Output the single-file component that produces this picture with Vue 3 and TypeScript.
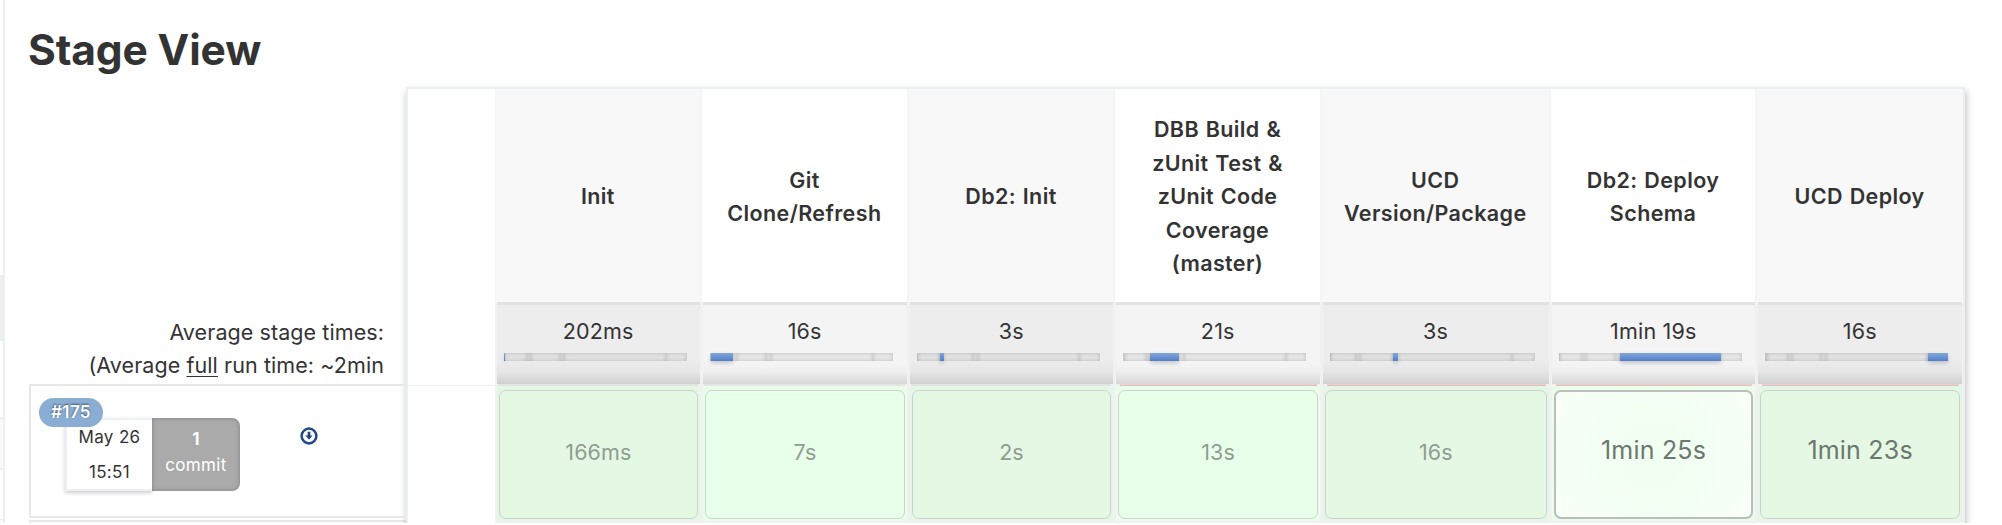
<script setup lang="ts">
interface Stage {
  name: string[]
  average: string
  duration: string
  weight: number
  wide?: boolean
  failedBefore?: boolean
  long?: boolean
  hovered?: boolean
}

const stages: Stage[] = [
  { name: ['Init'], average: '202ms', duration: '166ms', weight: 1.3 },
  { name: ['Git', 'Clone/Refresh'], average: '16s', duration: '7s', weight: 21.5 },
  { name: ['Db2: Init'], average: '3s', duration: '2s', weight: 4 },
  {
    name: ['DBB Build &', 'zUnit Test &', 'zUnit Code', 'Coverage', '(master)'],
    average: '21s', duration: '13s', weight: 29, failedBefore: true,
  },
  { name: ['UCD', 'Version/Package'], average: '3s', duration: '16s', weight: 4.7, wide: true, failedBefore: true },
  {
    name: ['Db2: Deploy', 'Schema'],
    average: '1min 19s', duration: '1min 25s', weight: 101, failedBefore: true, long: true, hovered: true,
  },
  { name: ['UCD Deploy'], average: '16s', duration: '1min 23s', weight: 20.5, failedBefore: true, long: true },
]
</script>

<template>
  <div class="page">
    <aside class="rail">
      <i class="selected"></i>
      <i class="item"></i>
      <i class="next"></i>
    </aside>
    <main>
      <h1>Stage View</h1>
      <div class="view">
        <section class="runs">
          <div class="totals">
            <div>Average stage times:</div>
            <div>(Average <u>full</u> run time: ~2min</div>
          </div>
          <div class="run">
            <div class="badge">#175</div>
            <div class="when"><div>May 26</div><div>15:51</div></div>
            <div class="commits"><b>1</b><div>commit</div></div>
            <svg class="download" viewBox="0 0 18 18">
              <circle cx="9" cy="9" r="7.4" fill="#fff" stroke="#204a87" stroke-width="2.5" />
              <path d="M7.6 4.8h2.8v3.8h2.2L9 12.7 5.4 8.6h2.2z" fill="#204a87" />
            </svg>
          </div>
          <div class="next-run"></div>
        </section>
        <section class="table">
          <div class="lead"><div></div></div>
          <div
            v-for="(stage, i) in stages"
            :key="i"
            class="column"
            :class="{ odd: i % 2 === 0, wide: stage.wide }"
          >
            <header>
              <div v-for="line in stage.name" :key="line">{{ line }}</div>
            </header>
            <div class="average">
              <div class="value">{{ stage.average }}</div>
              <div class="bar">
                <i
                  v-for="(part, j) in stages"
                  :key="j"
                  :class="{ on: i === j }"
                  :style="{ flexGrow: part.weight }"
                ></i>
              </div>
            </div>
            <div class="seam" :class="{ failed: stage.failedBefore }"></div>
            <div class="cell">
              <div class="result" :class="{ long: stage.long, hovered: stage.hovered }">
                {{ stage.duration }}
              </div>
            </div>
          </div>
        </section>
      </div>
    </main>
  </div>
</template>

<style>
body {
  background: #fff;
  overflow: hidden;
}
</style>

<style scoped>
* {
  box-sizing: border-box;
}

.page {
  display: flex;
  width: 2002px;
  height: 523px;
  overflow: hidden;
  color: #333;
  font: 21.5px/33.4px Inter, sans-serif;
}

.rail {
  display: flex;
  flex-direction: column;
  width: 5px;
  border-right: 2px solid #ecf0f4;
}

.rail i {
  display: block;
}

.selected {
  margin-top: 275px;
  height: 66px;
  background: #eaeff2;
}

.item {
  margin-top: 76px;
  height: 53px;
  background: #f9f9f8;
  border-top: 2px solid #edf1f4;
  border-bottom: 2px solid #edf1f4;
}

.next {
  margin-top: 49px;
  height: 4px;
  background: #f9f9f8;
  border-top: 1px solid #edf1f4;
}

main {
  flex: 1;
  padding-left: 24px;
}

h1 {
  height: 87px;
  margin: 0 0 0 -1px;
  padding-top: 23.5px;
  font-size: 42.5px;
  line-height: 52px;
  font-weight: 700;
  letter-spacing: -0.15px;
}

.view {
  display: flex;
}

.runs {
  width: 377px;
  padding-top: 228.5px;
}

.totals {
  height: 68.5px;
  padding-right: 22px;
  text-align: right;
  white-space: nowrap;
  letter-spacing: 0.08px;
}

u {
  text-decoration-thickness: 1px;
  text-underline-offset: 3px;
}

.run {
  position: relative;
  display: flex;
  align-items: flex-start;
  height: 134px;
  padding: 32px 0 0 34px;
  border: 2px solid #e8e8e8;
  border-right-width: 1px;
  font-size: 17px;
  letter-spacing: 0.35px;
}

.badge {
  position: absolute;
  top: 12px;
  left: 8px;
  width: 64px;
  height: 29px;
  border-radius: 15px;
  background: #8aadd3;
  color: #fff;
  font-weight: 600;
  line-height: 29px;
  text-align: center;
  text-shadow: 0 -1px 2px #456;
}

.when {
  width: 87px;
  height: 73px;
  border: 2px solid #ecf0f4;
  border-right: 0;
  box-shadow: 0 2px 4px #0003;
  text-align: center;
  line-height: 34.5px;
}

.commits {
  width: 88px;
  height: 73px;
  padding-top: 8px;
  border-radius: 0 8px 8px 0;
  background: #aaa;
  box-shadow: inset 0 0 4px #0004;
  color: #fff;
  text-align: center;
  line-height: 26px;
}

.commits b {
  display: block;
}

.download {
  width: 18px;
  height: 18px;
  margin: 9px 0 0 60px;
}

.next-run {
  height: 10px;
  margin-top: 2px;
  border: 2px solid #e8e8e8;
  border-right-width: 1px;
}

.table {
  display: flex;
  width: 1559px;
  height: 460px;
  border: 2px solid #ecf0f4;
  background: #fff;
  box-shadow: 1px 4px 7px #0004;
}

.lead {
  flex: none;
  width: 86.6px;
}

.lead div {
  height: 297px;
  border-bottom: 1px solid #f0f0f0;
}

.column {
  flex: none;
  width: 206.55px;
  height: 434px;
  background: #f1f1f1;
}

.column.wide {
  width: 229px;
}

.column header {
  display: flex;
  flex-direction: column;
  align-items: center;
  justify-content: center;
  height: 213px;
  padding-top: 3px;
  border: solid #f5f5f5;
  border-width: 0 1px;
  background: #fff;
  font-weight: 620;
  letter-spacing: 0.38px;
  word-spacing: 1px;
  white-space: nowrap;
}

.column.odd header {
  background: #f8f8f8;
}

.average {
  height: 82px;
  margin: 0 1px 0 2px;
  padding: 10px 13.5px 0 7px;
  border-top: 3px solid #e2e2e2;
  background: linear-gradient(#f4f4f4 75%, #efefef 84%, #d8d8d8);
}

.odd .average {
  background: linear-gradient(#ededed 70%, #e7e7e7 84%, #d0d0d0);
}

.value {
  padding-left: 6px;
  height: 38px;
  line-height: 33px;
  letter-spacing: 0.2px;
  text-align: center;
}

.bar {
  display: flex;
  width: 100%;
  height: 8px;
}

.bar i {
  flex-basis: 0;
  background: #e9e9e9;
  box-shadow: inset 0 0 4px #0003;
}

.odd .bar i {
  background: #e4e4e4;
}

.bar i.on,
.odd .bar i.on {
  background: linear-gradient(#82a8d6, #527dcc);
  box-shadow: 0 2px 4px #0003;
}

.seam {
  height: 2px;
  margin: 0 3px;
  background: #e4e4e4;
}

.seam.failed {
  margin: 0 4px 0 6px;
  background: linear-gradient(#e9dcdc, #e3b4b4);
}

.cell {
  height: 135px;
  margin: 0 1px 0 2px;
  padding: 4px 2px 3px 2px;
  background: #e8fee9;
}

.odd .cell {
  background: #e4f7e4;
}

.result {
  display: flex;
  align-items: center;
  justify-content: center;
  height: 129px;
  padding-bottom: 4px;
  border: 1px solid #ccd2d2;
  border-radius: 7px;
  background: #e8ffea;
  color: #8f9d90;
  letter-spacing: 0.1px;
}

.odd .result {
  background: #e4f8e4;
}

.result.long {
  padding-bottom: 7px;
  color: #6d776e;
  font-size: 25px;
  letter-spacing: 0.2px;
}

.result.hovered {
  border: 2px solid #bdbdbd;
  background: radial-gradient(circle, #effff0, #f8fff8);
}
</style>
